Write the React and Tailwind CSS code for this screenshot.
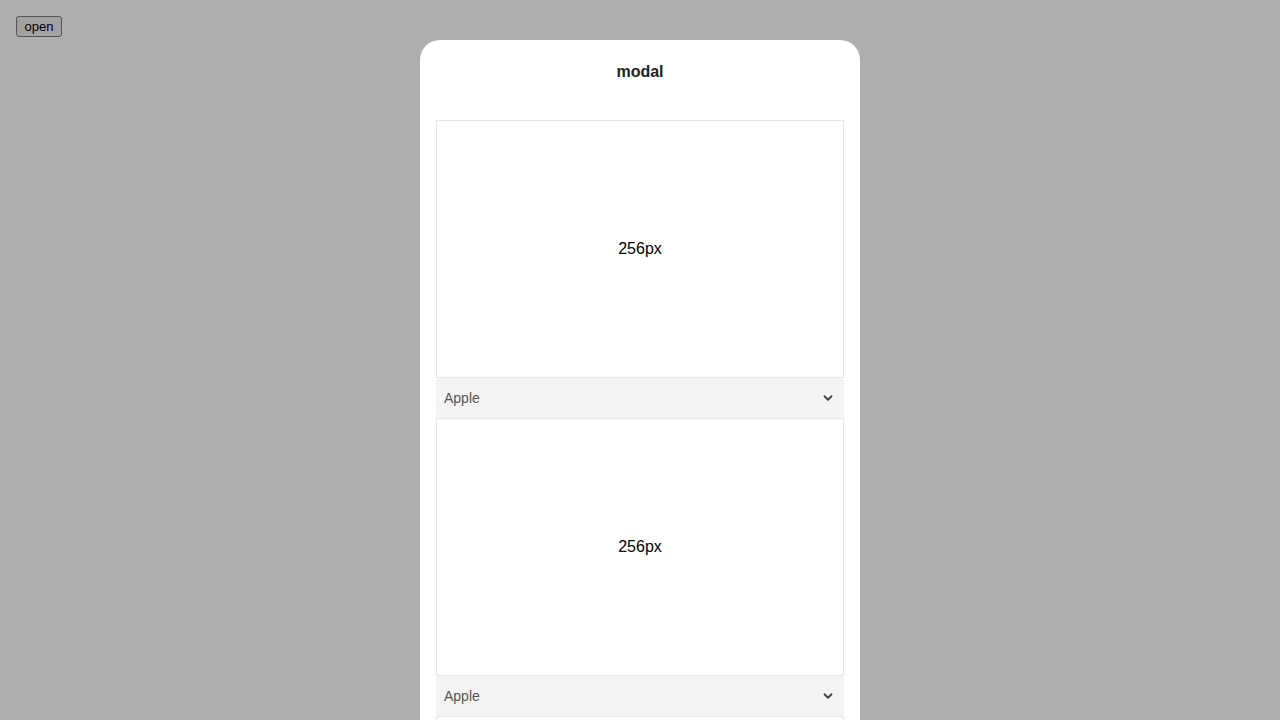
import { ChevronDown } from "lucide-react";

const sections = [1, 2, 3];

function Panel() {
  return (
    <div className="h-[258px] border border-[#e6e6e6] flex items-center justify-center text-base text-black">
      256px
    </div>
  );
}

function FruitSelect() {
  return (
    <div className="h-10 bg-[#f4f4f4] rounded-[4px] flex items-center justify-between pl-2 pr-[9px] text-sm text-[#555]">
      <span>Apple</span>
      <ChevronDown size={14} strokeWidth={3.2} className="text-[#444]" />
    </div>
  );
}

export default function App() {
  return (
    <div className="h-[720px] overflow-hidden bg-[#aeaeae] font-['Liberation_Sans',Arial,sans-serif]">
      <div className="flex px-4 pt-4">
        <button className="h-[21px] px-[7.5px] text-[13px] leading-none text-black bg-[#a2a2a2] border border-[#555] rounded-[3px]">
          open
        </button>
      </div>
      <div className="mx-auto mt-[3px] w-[440px] bg-white rounded-t-[20px] px-4">
        <div className="h-16 flex items-center justify-center text-base font-bold text-[#222]">
          modal
        </div>
        <div className="pt-4 flex flex-col">
          {sections.map((s) => (
            <div key={s}>
              <Panel />
              <FruitSelect />
            </div>
          ))}
        </div>
      </div>
    </div>
  );
}
